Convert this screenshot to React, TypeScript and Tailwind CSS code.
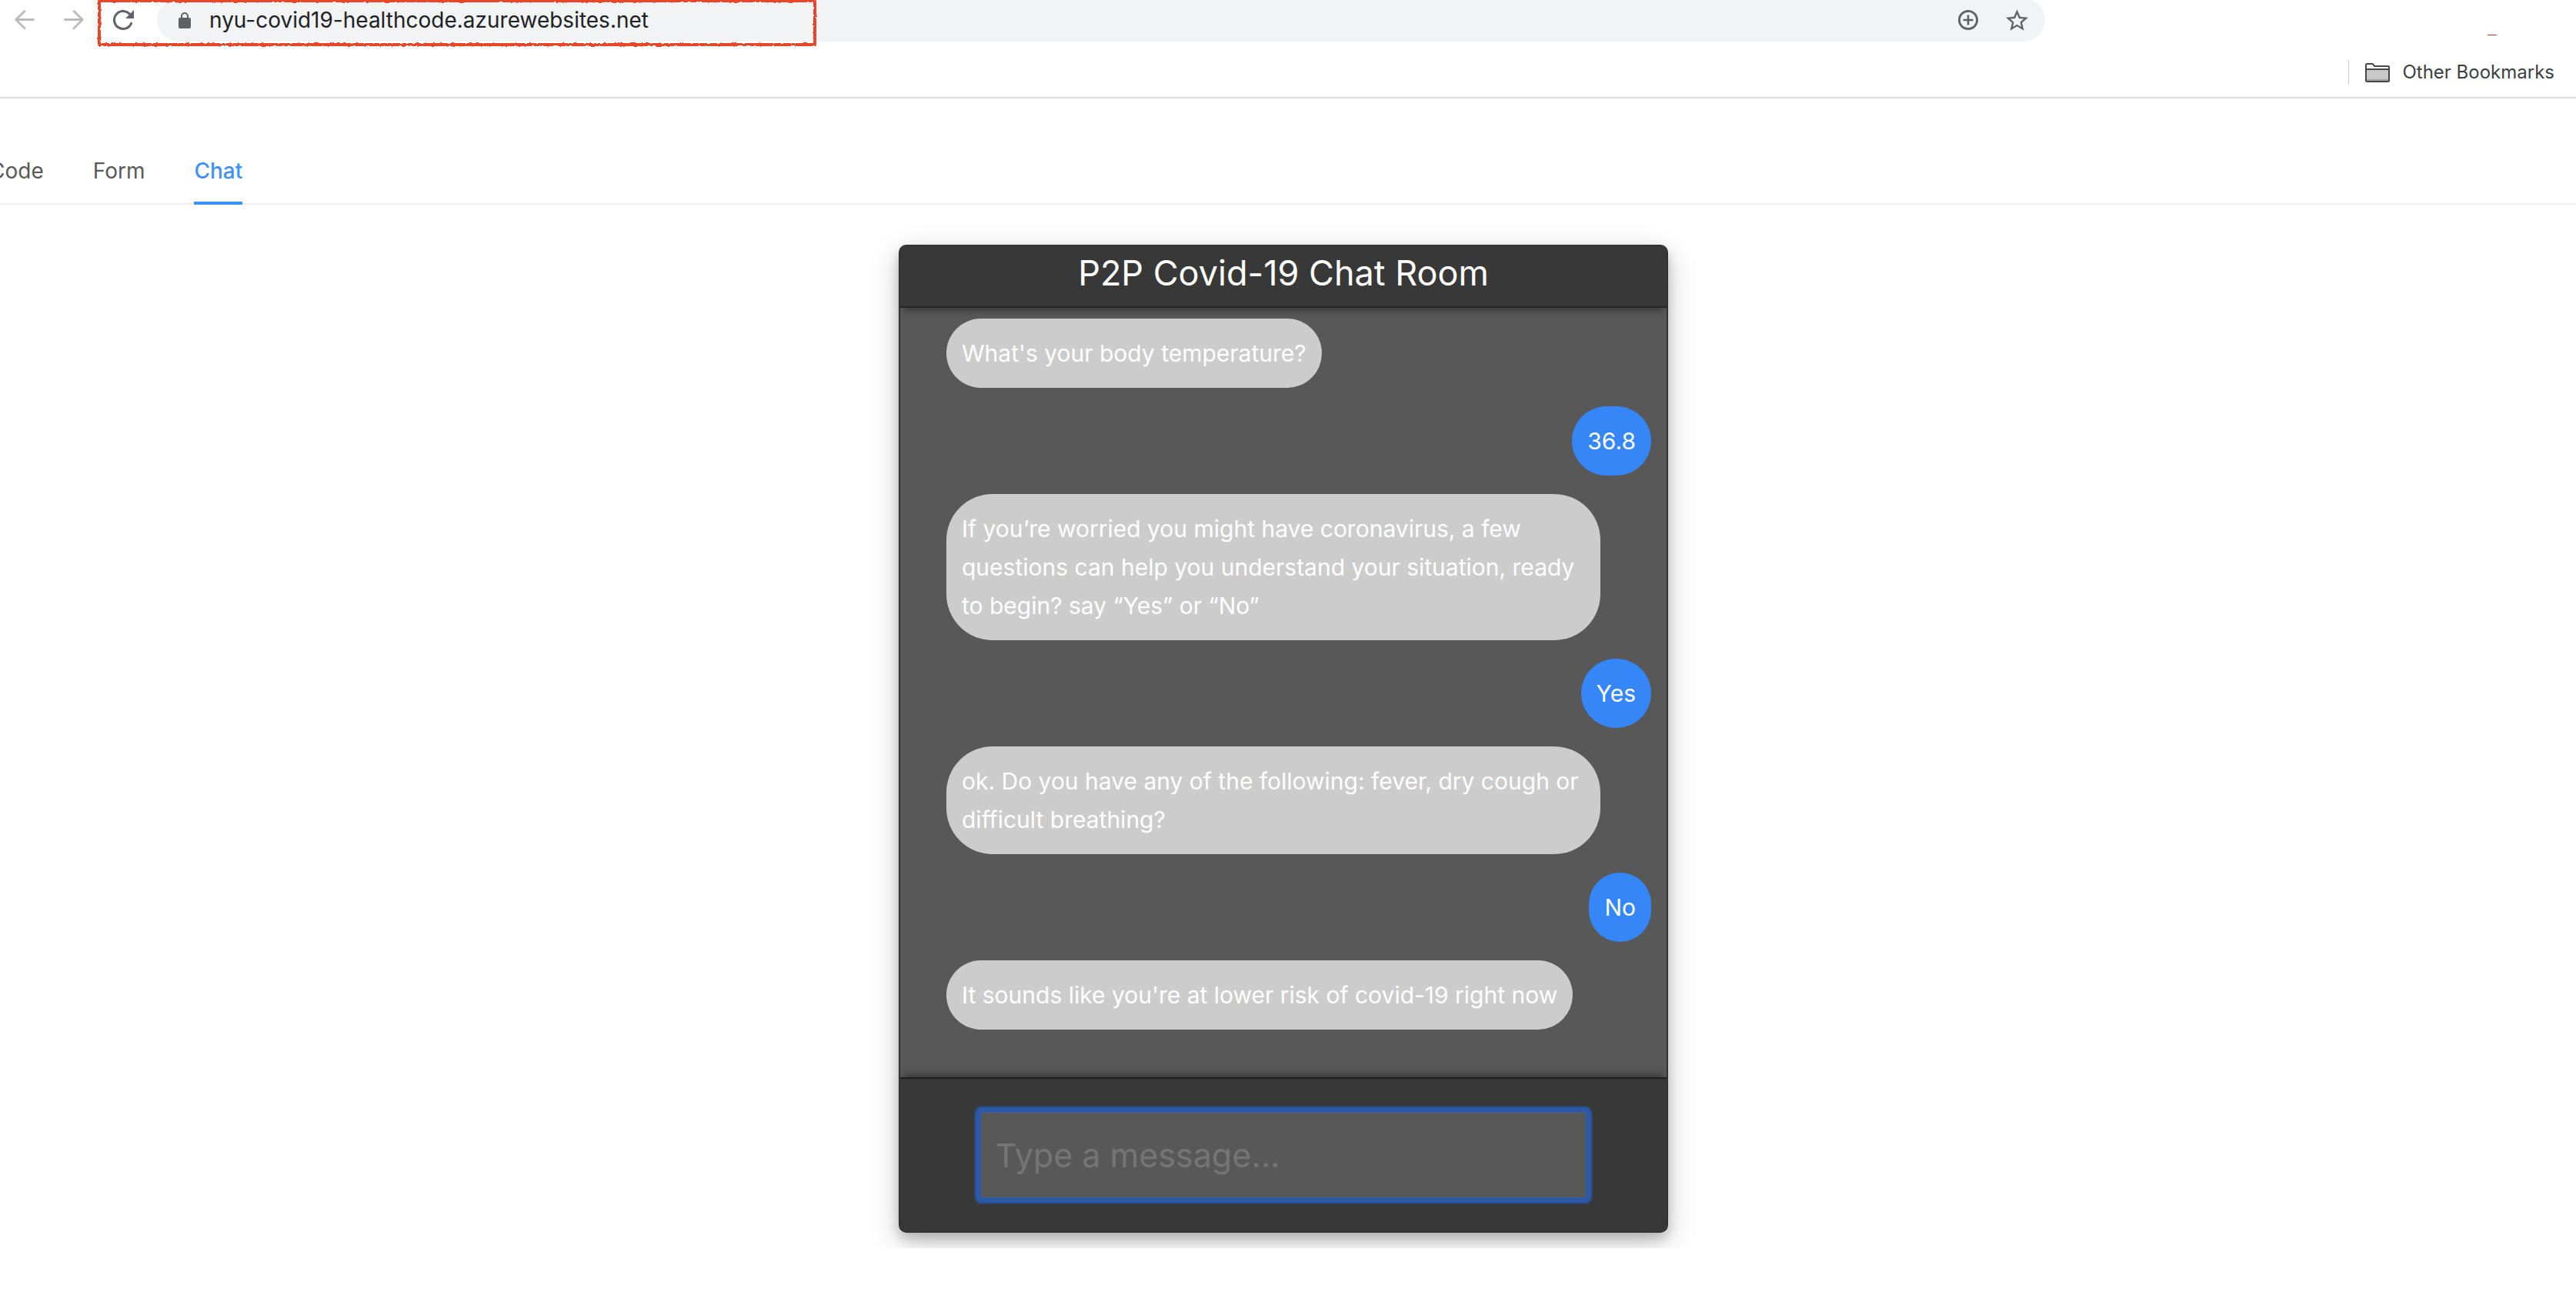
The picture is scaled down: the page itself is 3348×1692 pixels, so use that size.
type Message = { from: "bot" | "user"; text: string };

const messages: Message[] = [
  { from: "bot", text: "What's your body temperature?" },
  { from: "user", text: "36.8" },
  {
    from: "bot",
    text: "If you’re worried you might have coronavirus, a few questions can help you understand your situation, ready to begin? say “Yes” or “No”",
  },
  { from: "user", text: "Yes" },
  {
    from: "bot",
    text: "ok. Do you have any of the following: fever, dry cough or difficult breathing?",
  },
  { from: "user", text: "No" },
  { from: "bot", text: "It sounds like you're at lower risk of covid-19 right now" },
];

function BackIcon() {
  return (
    <svg width="26" height="26" viewBox="0 0 26 26" fill="none" stroke="#babbbd" strokeWidth="2.8" strokeLinecap="round" strokeLinejoin="round">
      <path d="M24.5 12.5H2M13 1.5l-11.3 11 11.3 11.3" />
    </svg>
  );
}

function ForwardIcon() {
  return (
    <svg width="26" height="26" viewBox="0 0 26 26" fill="none" stroke="#babbbd" strokeWidth="2.8" strokeLinecap="round" strokeLinejoin="round">
      <path d="M1.5 12.5H24M13 1.5l11.3 11L13 23.8" />
    </svg>
  );
}

function ReloadIcon() {
  return (
    <svg width="27" height="26" viewBox="0 0 27 26" fill="none">
      <path d="M23.6 17.4A11.5 11.5 0 1 1 21.2 4.9" stroke="#5f6368" strokeWidth="3" strokeLinecap="round" />
      <path d="M27 0v11H16z" fill="#5f6368" />
    </svg>
  );
}

function LockIcon() {
  return (
    <svg width="16" height="21" viewBox="0 0 16 21" fill="none" className="shrink-0">
      <path d="M4 8V5a4 4 0 0 1 8 0v3" stroke="#606164" strokeWidth="2" />
      <rect y="7" width="16" height="14" rx="2" fill="#606164" />
    </svg>
  );
}

function ZoomIcon() {
  return (
    <svg width="26" height="26" viewBox="0 0 26 26" fill="none" stroke="#606164">
      <circle cx="13" cy="13" r="11.6" strokeWidth="2.8" />
      <path d="M13 6.5v13M6.5 13h13" strokeWidth="2.6" />
    </svg>
  );
}

function StarIcon() {
  return (
    <svg width="29" height="28" viewBox="2 2 20 19" fill="#606164">
      <path d="m22 9.24-7.19-.62L12 2 9.19 8.63 2 9.24l5.46 4.73L5.82 21 12 17.27 18.18 21l-1.63-7.03L22 9.24zM12 15.4l-3.76 2.27 1-4.28-3.32-2.88 4.38-.38L12 6.1l1.71 4.04 4.38.38-3.32 2.88 1 4.28L12 15.4z" />
    </svg>
  );
}

function FolderIcon() {
  return (
    <svg width="32" height="25" viewBox="0 0 32 25" fill="none">
      <path d="M1 8h30v16H1z" fill="#c8c8c8" />
      <path d="M1 21h30v3H1z" fill="#a2a2a2" />
      <path
        d="M1 2.5Q1 1 2.500 1h6.500q1 0 1.500.8L12 4h18q1 0 1 1v17.500q0 1.500-1.500 1.500h-27Q1 24 1 22.500z"
        stroke="#474749"
        strokeWidth="2"
      />
      <path d="M1 8h30" stroke="#474749" strokeWidth="2" />
    </svg>
  );
}

/* Hand-drawn marker frame around the address */
function MarkerFrame() {
  return (
    <svg className="pointer-events-none absolute top-0 left-[125px]" width="938" height="64" viewBox="0 0 938 64" fill="none" aria-hidden="true">
      <filter id="marker" filterUnits="userSpaceOnUse" x="0" y="0" width="938" height="64">
        <feTurbulence type="fractalNoise" baseFrequency="0.25" numOctaves="2" seed="4" result="noise" />
        <feDisplacementMap in="SourceGraphic" in2="noise" scale="3" xChannelSelector="R" yChannelSelector="G" />
      </filter>
      <rect x="4" y="3" width="930" height="57" rx="1" stroke="#ea4427" strokeWidth="4" filter="url(#marker)" />
    </svg>
  );
}

function Bubble({ from, text }: Message) {
  return (
    <li
      className={
        from === "bot"
          ? "max-w-[850px] self-start rounded-[60px] bg-[#cccccc] p-5 text-[30px] leading-[50px] text-white"
          : "max-w-[850px] self-end rounded-[60px] bg-[#3586f7] p-5 text-[30px] leading-[50px] text-white"
      }
    >
      {text}
    </li>
  );
}

export default function App() {
  return (
    <div className="min-h-screen overflow-hidden bg-white font-['Inter',sans-serif]">
      <header className="relative border-b-2 border-[#dcdce1]">
        <div className="-mt-0.5 flex h-14 items-center pl-[19px]">
          <div className="flex items-center gap-[38px]">
            <button type="button" aria-label="Back">
              <BackIcon />
            </button>
            <button type="button" aria-label="Forward">
              <ForwardIcon />
            </button>
            <button type="button" aria-label="Reload">
              <ReloadIcon />
            </button>
          </div>
          <div className="mr-[690px] ml-[30px] flex h-14 flex-1 items-center rounded-full bg-[#f1f3f4] pr-[22px] pl-7">
            <LockIcon />
            <input
              type="text"
              aria-label="Address"
              defaultValue="nyu-covid19-healthcode.azurewebsites.net"
              className="ml-6 min-w-0 flex-1 bg-transparent text-[28px] text-[#202124] outline-none"
            />
            <div className="flex items-center gap-9">
              <button type="button" aria-label="Zoom">
                <ZoomIcon />
              </button>
              <button type="button" aria-label="Bookmark this page">
                <StarIcon />
              </button>
            </div>
          </div>
        </div>
        <div className="flex h-[72px] items-center justify-end pt-2 pr-7">
          <div className="flex h-8 items-center border-l border-[#c9cacc] pl-[21px]">
            <button type="button" className="flex items-center gap-4 text-2xl text-[#3c4043]">
              <FolderIcon />
              Other Bookmarks
            </button>
          </div>
        </div>
        <MarkerFrame />
        <span className="absolute top-[47px] right-[103px] h-px w-3 rounded-full bg-[#a8402c]" />
      </header>

      <nav aria-label="Sections" className="border-b-2 border-[#efefef] pt-[72px]">
        <div className="-mb-0.5 -ml-3.5 flex gap-16 text-[28px] leading-[44px] text-[#595959]">
          <a href="#code" className="border-b-4 border-transparent pb-[18px]">
            Code
          </a>
          <a href="#form" className="border-b-4 border-transparent pb-[18px]">
            Form
          </a>
          <a href="#chat" aria-current="page" className="border-b-4 border-[#4091f7] pb-[18px] font-medium text-[#4091f7]">
            Chat
          </a>
        </div>
      </nav>

      <main className="overflow-hidden pt-[52px] pr-3 pb-5">
        <section className="mx-auto w-full max-w-[1000px] rounded-[10px] border-2 border-[#333333] bg-[#585858] shadow-[0_8px_16px_rgba(0,0,0,0.2),0_12px_40px_rgba(0,0,0,0.19)]">
          <div className="relative z-10 rounded-t-lg border-b-2 border-[#262626] bg-[#383838] pb-2 shadow-[0_8px_8px_-4px_rgba(0,0,0,0.35)]">
            <h1 className="text-center text-[45px] leading-[70px] text-white">P2P Covid-19 Chat Room</h1>
          </div>
          <ul className="flex flex-col gap-6 pt-3.5 pr-5 pb-[62px] pl-[60px]">
            {messages.map((m) => (
              <Bubble key={m.text} from={m.from} text={m.text} />
            ))}
          </ul>
          <form
            onSubmit={(e) => e.preventDefault()}
            className="relative rounded-b-lg border-t-2 border-[#1e1e1e] bg-[#383838] py-[39px] shadow-[0_-8px_8px_-4px_rgba(0,0,0,0.35)]"
          >
            <input
              type="text"
              aria-label="Message"
              placeholder="Type a message..."
              className="mx-auto block h-[120px] w-4/5 rounded-md border-4 border-[#2a59ab] bg-[#585858] px-5 text-[43px] text-white shadow-[0_0_0_2px_#2a59ab,0_0_0_4px_#30466b,inset_0_0_2px_1px_#3f609b] outline-none placeholder:text-[#757575]"
            />
          </form>
        </section>
      </main>
    </div>
  );
}
